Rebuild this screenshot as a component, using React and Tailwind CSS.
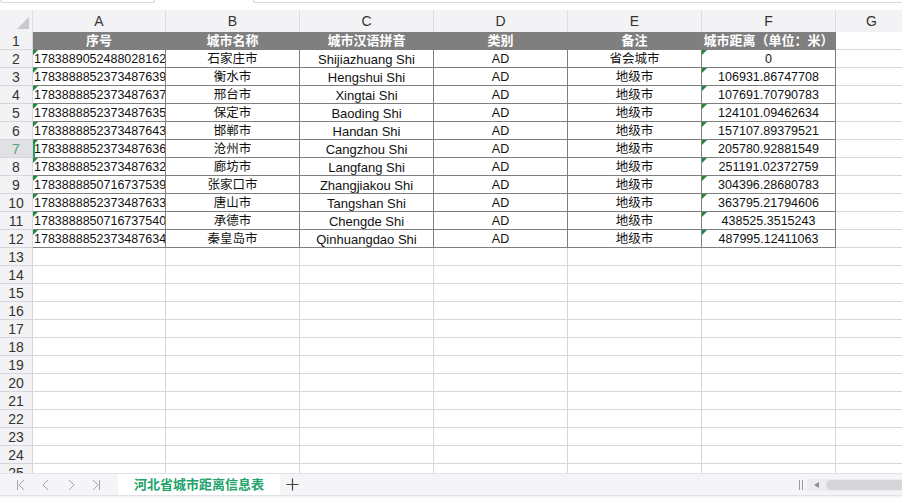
import React from 'react';

const FONT = { fontFamily: '"Liberation Sans", Arial, "Noto Sans CJK SC", sans-serif' };

const COLS = [
  { k: 'A', w: 'w-[133px]' },
  { k: 'B', w: 'w-[134px]' },
  { k: 'C', w: 'w-[134px]' },
  { k: 'D', w: 'w-[134px]' },
  { k: 'E', w: 'w-[134px]' },
  { k: 'F', w: 'w-[134px]' },
  { k: 'G', w: 'w-[72px]' },
];

const HEAD = ['序号', '城市名称', '城市汉语拼音', '类别', '备注', '城市距离（单位：米）'];

const DATA = [
  ['1783889052488028162', '石家庄市', 'Shijiazhuang Shi', 'AD', '省会城市', '0'],
  ['1783888852373487639', '衡水市', 'Hengshui Shi', 'AD', '地级市', '106931.86747708'],
  ['1783888852373487637', '邢台市', 'Xingtai Shi', 'AD', '地级市', '107691.70790783'],
  ['1783888852373487635', '保定市', 'Baoding Shi', 'AD', '地级市', '124101.09462634'],
  ['1783888852373487643', '邯郸市', 'Handan Shi', 'AD', '地级市', '157107.89379521'],
  ['1783888852373487636', '沧州市', 'Cangzhou Shi', 'AD', '地级市', '205780.92881549'],
  ['1783888852373487632', '廊坊市', 'Langfang Shi', 'AD', '地级市', '251191.02372759'],
  ['1783888850716737539', '张家口市', 'Zhangjiakou Shi', 'AD', '地级市', '304396.28680783'],
  ['1783888852373487633', '唐山市', 'Tangshan Shi', 'AD', '地级市', '363795.21794606'],
  ['1783888850716737540', '承德市', 'Chengde Shi', 'AD', '地级市', '438525.3515243'],
  ['1783888852373487634', '秦皇岛市', 'Qinhuangdao Shi', 'AD', '地级市', '487995.12411063'],
];

function Flag() {
  // little green "number stored as text" marker
  return (
    <svg width="5" height="5" className="absolute left-0 top-0">
      <polygon points="0,0 5,0 0,5" fill="#1f8a3b" />
    </svg>
  );
}

function Cell({ row, ci, children }) {
  const inTable = row >= 1 && row <= 12 && ci <= 5;
  const isHead = row === 1 && ci <= 5;
  const col = COLS[ci];
  const flag = row >= 2 && row <= 12 && (ci === 0 || ci === 5);
  const selected = row === 7 && ci === 0;
  return (
    <div
      className={`relative shrink-0 h-full flex items-center overflow-hidden whitespace-nowrap border-r border-b ${col.w} ${
        inTable ? 'border-[#7f7f7f]' : 'border-[#d6d6de]'
      } ${isHead ? 'bg-[#7f7f7f] text-white font-bold text-[13px] justify-center' : 'bg-white text-[#111] text-[12.5px] pt-[2px]'} ${
        !isHead && ci === 0 ? 'justify-start pl-px' : 'justify-center'
      } ${selected ? 'shadow-[inset_2px_0_0_#21a366]' : ''}`}
    >
      {flag && <Flag />}
      <span className={ci === 2 && !isHead ? 'text-[13px]' : ''}>{children}</span>
    </div>
  );
}

function Row({ n }) {
  const values = n === 1 ? HEAD : DATA[n - 2] || [];
  const sel = n === 7;
  return (
    <div className="flex h-[18px] shrink-0">
      <div
        className={`w-[33px] shrink-0 h-full flex items-center justify-center pt-px text-[14px] border-r border-b border-[#d6d6de] ${
          sel ? 'bg-[#e1e1e5] text-[#4aa57a]' : 'bg-[#f3f3f5] text-[#333]'
        }`}
      >
        {n}
      </div>
      {COLS.map((c, ci) => (
        <Cell key={c.k} row={n} ci={ci}>
          {values[ci] || ''}
        </Cell>
      ))}
    </div>
  );
}

function NavIcon({ kind }) {
  return (
    <div className="w-[25px] flex items-center justify-center">
      <svg width="12" height="12" viewBox="0 0 12 12" fill="none" stroke="#a3a3ab" strokeWidth="1">
        {kind === 'first' && (
          <>
            <path d="M2.5 1v10" />
            <path d="M9 1L4 6l5 5" />
          </>
        )}
        {kind === 'prev' && <path d="M8 1L3 6l5 5" />}
        {kind === 'next' && <path d="M4 1l5 5-5 5" />}
        {kind === 'last' && (
          <>
            <path d="M3 1l5 5-5 5" />
            <path d="M9.5 1v10" />
          </>
        )}
      </svg>
    </div>
  );
}

export default function App() {
  const rows = Array.from({ length: 25 }, (_, i) => i + 1);
  return (
    <div className="w-[902px] h-[498px] overflow-hidden bg-[#f7f7f9] flex flex-col" style={FONT}>
      {/* name box + formula bar remnants */}
      <div className="h-[10px] shrink-0 flex items-start bg-white">
        <div className="w-[155px] h-[3px] border border-t-0 border-[#d8d8de] rounded-b-[3px] bg-white" />
        <div className="ml-[98px] flex-1 h-[3px] border border-t-0 border-r-0 border-[#d8d8de] rounded-bl-[3px] bg-white" />
      </div>

      {/* grid */}
      <div className="h-[463px] shrink-0 overflow-hidden flex flex-col">
        <div className="flex h-[22px] shrink-0 bg-[#f3f3f5]">
          <div className="w-[33px] shrink-0 h-full flex items-end justify-end pr-[3px] pb-[3px] border-r border-[#dcdce2]">
            <svg width="12" height="12">
              <polygon points="12,0 12,12 0,12" fill="#c8c8ce" />
            </svg>
          </div>
          {COLS.map((c) => (
            <div
              key={c.k}
              className={`${c.w} shrink-0 h-full flex items-center justify-center pt-px text-[14px] text-[#333] border-r border-[#dcdce2]`}
            >
              {c.k}
            </div>
          ))}
        </div>
        {rows.map((n) => (
          <Row key={n} n={n} />
        ))}
      </div>

      {/* sheet tab bar */}
      <div className="h-[22px] shrink-0 flex items-stretch bg-[#f5f5f7] border-t border-[#e2e2e6]">
        <div className="flex pl-[8px]">
          <NavIcon kind="first" />
          <NavIcon kind="prev" />
          <NavIcon kind="next" />
          <NavIcon kind="last" />
        </div>
        <div className="ml-[10px] w-[162px] bg-white flex items-center justify-center text-[13px] font-bold text-[#22a36b]">
          河北省城市距离信息表
        </div>
        <div className="w-[24px] flex items-center justify-center">
          <svg width="13" height="13" viewBox="0 0 13 13" stroke="#444" strokeWidth="1.2">
            <path d="M6.5 0.5v12M0.5 6.5h12" />
          </svg>
        </div>
        <div className="flex-1" />
        <div className="w-[8px] flex items-center justify-center gap-[2px]">
          <div className="w-px h-[10px] bg-[#9a9aa2]" />
          <div className="w-px h-[10px] bg-[#9a9aa2]" />
        </div>
        <div className="w-[97px] flex items-center">
          <div className="flex-1 h-[12px] ml-[2px] bg-[#ececf0] flex items-center">
            <div className="w-[19px] flex items-center justify-center">
              <svg width="5" height="6">
                <polygon points="5,0 5,6 0,3" fill="#8d8d96" />
              </svg>
            </div>
            <div className="flex-1 h-[10px] rounded-l-full bg-[#d6d6da]" />
          </div>
        </div>
      </div>
      <div className="flex-1 border-t border-[#e2e2e6] bg-[#f5f5f7]" />
    </div>
  );
}
